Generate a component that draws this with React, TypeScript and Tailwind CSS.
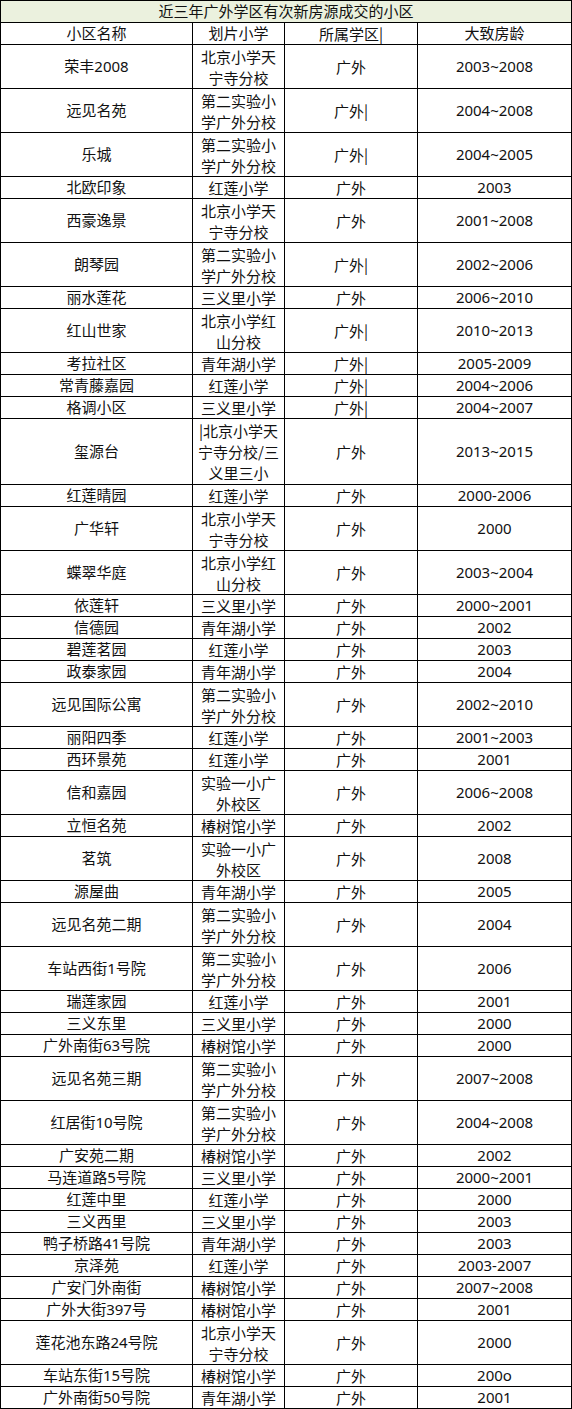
import React from "react";

type Row = { name: string; school: string[]; district: string; years: string };

const rows: Row[] = [
  { name: "荣丰2008", school: ["北京小学天", "宁寺分校"], district: "广外", years: "2003~2008" },
  { name: "远见名苑", school: ["第二实验小", "学广外分校"], district: "广外|", years: "2004~2008" },
  { name: "乐城", school: ["第二实验小", "学广外分校"], district: "广外|", years: "2004~2005" },
  { name: "北欧印象", school: ["红莲小学"], district: "广外", years: "2003" },
  { name: "西豪逸景", school: ["北京小学天", "宁寺分校"], district: "广外", years: "2001~2008" },
  { name: "朗琴园", school: ["第二实验小", "学广外分校"], district: "广外|", years: "2002~2006" },
  { name: "丽水莲花", school: ["三义里小学"], district: "广外", years: "2006~2010" },
  { name: "红山世家", school: ["北京小学红", "山分校"], district: "广外|", years: "2010~2013" },
  { name: "考拉社区", school: ["青年湖小学"], district: "广外|", years: "2005-2009" },
  { name: "常青藤嘉园", school: ["红莲小学"], district: "广外|", years: "2004~2006" },
  { name: "格调小区", school: ["三义里小学"], district: "广外|", years: "2004~2007" },
  { name: "玺源台", school: ["|北京小学天", "宁寺分校/三", "义里三小"], district: "广外", years: "2013~2015" },
  { name: "红莲晴园", school: ["红莲小学"], district: "广外", years: "2000-2006" },
  { name: "广华轩", school: ["北京小学天", "宁寺分校"], district: "广外", years: "2000" },
  { name: "蝶翠华庭", school: ["北京小学红", "山分校"], district: "广外", years: "2003~2004" },
  { name: "依莲轩", school: ["三义里小学"], district: "广外", years: "2000~2001" },
  { name: "信德园", school: ["青年湖小学"], district: "广外", years: "2002" },
  { name: "碧莲茗园", school: ["红莲小学"], district: "广外", years: "2003" },
  { name: "政泰家园", school: ["青年湖小学"], district: "广外", years: "2004" },
  { name: "远见国际公寓", school: ["第二实验小", "学广外分校"], district: "广外", years: "2002~2010" },
  { name: "丽阳四季", school: ["红莲小学"], district: "广外", years: "2001~2003" },
  { name: "西环景苑", school: ["红莲小学"], district: "广外", years: "2001" },
  { name: "信和嘉园", school: ["实验一小广", "外校区"], district: "广外", years: "2006~2008" },
  { name: "立恒名苑", school: ["椿树馆小学"], district: "广外", years: "2002" },
  { name: "茗筑", school: ["实验一小广", "外校区"], district: "广外", years: "2008" },
  { name: "源屋曲", school: ["青年湖小学"], district: "广外", years: "2005" },
  { name: "远见名苑二期", school: ["第二实验小", "学广外分校"], district: "广外", years: "2004" },
  { name: "车站西街1号院", school: ["第二实验小", "学广外分校"], district: "广外", years: "2006" },
  { name: "瑞莲家园", school: ["红莲小学"], district: "广外", years: "2001" },
  { name: "三义东里", school: ["三义里小学"], district: "广外", years: "2000" },
  { name: "广外南街63号院", school: ["椿树馆小学"], district: "广外", years: "2000" },
  { name: "远见名苑三期", school: ["第二实验小", "学广外分校"], district: "广外", years: "2007~2008" },
  { name: "红居街10号院", school: ["第二实验小", "学广外分校"], district: "广外", years: "2004~2008" },
  { name: "广安苑二期", school: ["椿树馆小学"], district: "广外", years: "2002" },
  { name: "马连道路5号院", school: ["三义里小学"], district: "广外", years: "2000~2001" },
  { name: "红莲中里", school: ["红莲小学"], district: "广外", years: "2000" },
  { name: "三义西里", school: ["三义里小学"], district: "广外", years: "2003" },
  { name: "鸭子桥路41号院", school: ["青年湖小学"], district: "广外", years: "2003" },
  { name: "京泽苑", school: ["红莲小学"], district: "广外", years: "2003-2007" },
  { name: "广安门外南街", school: ["椿树馆小学"], district: "广外", years: "2007~2008" },
  { name: "广外大街397号", school: ["椿树馆小学"], district: "广外", years: "2001" },
  { name: "莲花池东路24号院", school: ["北京小学天", "宁寺分校"], district: "广外", years: "2000" },
  { name: "车站东街15号院", school: ["椿树馆小学"], district: "广外", years: "200o" },
  { name: "广外南街50号院", school: ["青年湖小学"], district: "广外", years: "2001" },
];

const heightClass: Record<number, string> = {
  1: "h-[21px]",
  2: "h-[43px]",
  3: "h-[65px]",
};

const cellBase = "bg-white flex flex-col items-center justify-center text-center leading-[21px]";
const cjk = "font-['Noto_Sans_CJK_SC',sans-serif]";

export default function App() {
  return (
    <div
      className="w-[572px] bg-white text-[15px] text-[#111]"
      style={{ fontFamily: '"Noto Sans", "Noto Sans CJK SC", sans-serif' }}
    >
      <div className="grid grid-cols-[191px_91px_132px_153px] gap-px bg-black p-px">
        <div className="col-span-4 h-[21px] bg-[#ebf1de] flex items-center justify-center leading-[21px]">
          近三年广外学区有次新房源成交的小区
        </div>
        <div className={`${cellBase} h-[21px]`}>小区名称</div>
        <div className={`${cellBase} h-[21px]`}>划片小学</div>
        <div className={`${cellBase} ${cjk} h-[21px]`}>所属学区|</div>
        <div className={`${cellBase} h-[21px]`}>大致房龄</div>
        {rows.map((r, i) => {
          const h = heightClass[r.school.length];
          return (
            <React.Fragment key={i}>
              <div className={`${cellBase} ${h}`}>{r.name}</div>
              <div className={`${cellBase} ${cjk} ${h} leading-[20px] whitespace-nowrap`}>
                {r.school.map((s, j) => (
                  <div key={j}>{s}</div>
                ))}
              </div>
              <div className={`${cellBase} ${cjk} ${h}`}>{r.district}</div>
              <div className={`${cellBase} ${h}`}>{r.years}</div>
            </React.Fragment>
          );
        })}
      </div>
    </div>
  );
}
